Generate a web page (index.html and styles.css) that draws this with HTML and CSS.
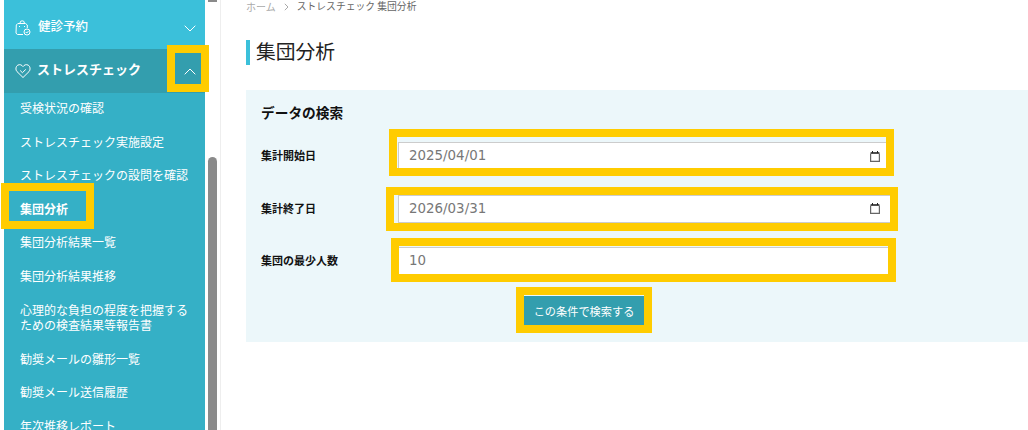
FILE: index.html
```html
<!DOCTYPE html>
<html lang="ja">
<head>
<meta charset="utf-8">
<title>集団分析</title>
<link rel="stylesheet" href="styles.css">
</head>
<body>
<div class="layout">
  <aside class="aside">
    <nav class="nav">
      <div class="nav-head">
        <svg class="nav-icon nav-icon-bag" viewBox="0 0 16 16" fill="none" stroke="currentColor" stroke-width="1"><path d="M5 3.500V3a2.200 2.200 0 0 1 4.400 0v.5"/><path d="M8 14.500H2.500L1 13.200 1.300 5l1.500-1.500h7.800L12.300 5v3"/><circle cx="12" cy="12" r="3"/><path d="M10.700 12l1 1 1.700-1.800"/><path d="M4.500 6v1M9.500 6v1"/></svg>
        <span class="nav-title">健診予約</span>
        <span class="toggle toggle-low"><svg class="chev" viewBox="0 0 12 7" fill="none" stroke="currentColor"><path d="M.7.7L6 6l5.300-5.300"/></svg></span>
      </div>
      <div class="nav-head nav-head-active">
        <svg class="nav-icon" viewBox="0 0 16 16" fill="none" stroke="currentColor" stroke-width="1"><path d="M8 14.500L2 8.600C.3 6.800.700 3.200 2.900 2.100 4.900 1.100 6.800 1.900 8 3.600c1.200-1.700 3.100-2.500 5.100-1.500 2.200 1.100 2.600 4.700.9 6.500z"/><path d="M5.200 7.500l2.200 2.200 3.400-3.300"/></svg>
        <span class="nav-title nav-title-active">ストレスチェック</span>
        <span class="toggle"><svg class="chev" viewBox="0 0 12 7" fill="none" stroke="currentColor"><path d="M.7 6.300L6 1l5.300 5.300"/></svg></span>
      </div>
      <ul class="sub">
        <li class="sub-item">受検状況の確認</li>
        <li class="sub-item">ストレスチェック実施設定</li>
        <li class="sub-item">ストレスチェックの設問を確認</li>
        <li class="sub-item sub-item-current">集団分析</li>
        <li class="sub-item">集団分析結果一覧</li>
        <li class="sub-item">集団分析結果推移</li>
        <li class="sub-item">心理的な負担の程度を把握する<br>ための検査結果等報告書</li>
        <li class="sub-item">勧奨メールの雛形一覧</li>
        <li class="sub-item">勧奨メール送信履歴</li>
        <li class="sub-item">年次推移レポート</li>
      </ul>
    </nav>
    <div class="scrollbar"><div class="nub"></div><div class="thumb"></div></div>
  </aside>

  <main class="main">
    <div class="crumbs">
      <span class="crumb-home">ホーム</span>
      <svg class="crumb-sep" viewBox="0 0 5 8" fill="none" stroke="currentColor"><path d="M.8.800L4 4 .8 7.200"/></svg>
      <span class="crumb-now">ストレスチェック 集団分析</span>
    </div>
    <h1 class="page-title">集団分析</h1>
    <section class="panel">
      <h2 class="panel-title">データの検索</h2>
      <form class="form">
        <div class="row">
          <label class="label">集計開始日</label>
          <div class="field"><input class="field-input" type="text" value="2025/04/01"><svg class="cal" viewBox="0 0 10 11" fill="none"><path d="M2.500 0v2M7.500 0v2" stroke="#222"/><path d="M.6 2h8.800" stroke="#222" stroke-width="1.600"/><path d="M.6 2.500v7.900h8.800V2.500" stroke="#666" stroke-width="1.200"/></svg></div>
        </div>
        <div class="row">
          <label class="label">集計終了日</label>
          <div class="field"><input class="field-input" type="text" value="2026/03/31"><svg class="cal" viewBox="0 0 10 11" fill="none"><path d="M2.500 0v2M7.500 0v2" stroke="#222"/><path d="M.6 2h8.800" stroke="#222" stroke-width="1.600"/><path d="M.6 2.500v7.900h8.800V2.500" stroke="#666" stroke-width="1.200"/></svg></div>
        </div>
        <div class="row">
          <label class="label">集団の最少人数</label>
          <div class="field"><input class="field-input" type="text" value="10"></div>
        </div>
        <div class="actions"><button class="submit" type="button">この条件で検索する</button></div>
      </form>
    </section>
  </main>
</div>

<div class="mark mark-toggle"></div>
<div class="mark mark-menu"></div>
<div class="mark mark-start"></div>
<div class="mark mark-end"></div>
<div class="mark mark-min"></div>
<div class="mark mark-btn"></div>
</body>
</html>
```

FILE: styles.css
```css
* { box-sizing: border-box; }
html, body { margin: 0; padding: 0; height: 430px; overflow: hidden; background: #fff; }
body { position: relative; font-family: "Noto Sans CJK JP", "Noto Sans", sans-serif; color: #111; }

.layout { display: flex; height: 430px; }

/* sidebar */
.aside { display: flex; width: 221px; flex: none; padding-left: 4px; border-right: 1px solid #eeeeee; overflow: hidden; }
.nav { width: 201px; flex: none; background: #35b0c6; color: #fff; height: 430px; overflow: hidden; }
.nav-head { display: flex; align-items: center; height: 49px; padding: 3px 2px 0 11px; background: #3bc0da; }
.nav-head-active { height: 44px; padding-top: 0; background: #339eae; }
.nav-icon { width: 16px; height: 16px; flex: none; }
.nav-icon-bag { margin-top: 3px; }
.nav-title { flex: 1; margin-left: 7px; font-size: 12.500px; font-weight: 500; line-height: 16px; }
.nav-title-active { margin: 0 0 4px 6px; font-size: 13px; font-weight: 700; }
.toggle { display: flex; width: 26px; height: 31px; align-items: center; justify-content: center; }
.toggle-low { margin-top: 4px; }
.chev { width: 12px; height: 7px; }
.sub { list-style: none; margin: 0; padding: 0 0 0 16px; }
.sub-item { padding: 7px 0 11px; font-size: 12px; line-height: 15.600px; }
.sub-item-current { font-weight: 700; }

.scrollbar { width: 9px; flex: none; margin-left: 3px; }
.nub { height: 2px; background: #8a8a8a; }
.thumb { height: 273px; margin-top: 155px; border-radius: 5px 5px 0 0; background: #8a8a8a; }

/* main */
.main { flex: 1; min-width: 0; padding-left: 25px; }
.crumbs { display: flex; align-items: center; height: 13px; font-size: 10px; line-height: 13px; }
.crumb-home { color: #aaaaaa; }
.crumb-sep { width: 5px; height: 8px; margin: 0 8px 0 8px; color: #aaaaaa; }
.crumb-now { color: #666666; font-size: 9.800px; }
.page-title { margin: 27px 0 0; height: 25px; padding-left: 6px; border-left: 4px solid #3bc0da; font-size: 19.800px; font-weight: 400; line-height: 21px; color: #222; }
.panel { margin-top: 25px; height: 252px; padding: 13px 0 0 15px; background: #ecf7fa; }
.panel-title { margin: 0; font-size: 13.700px; font-weight: 700; line-height: 18px; color: #111; }
.form { width: 630px; margin-top: 21px; display: flex; flex-direction: column; }
.row { display: flex; align-items: center; height: 28px; margin-bottom: 24.700px; }
.label { width: 137px; flex: none; margin-bottom: 2px; font-size: 11px; font-weight: 700; color: #111; }
.field { display: flex; align-items: center; flex: 1; min-width: 0; height: 28px; padding: 0 10px; border: 1px solid #cccccc; background: #fff; }
.field-input { flex: 1; min-width: 0; height: 100%; margin: 0; padding: 0 0 1px; border: 0; background: transparent; color: #777777; font-family: "DejaVu Sans", sans-serif; font-size: 13.400px; outline: none; }
.cal { width: 10px; height: 11px; flex: none; }
.actions { margin-top: -4px; padding-left: 263px; }
.submit { display: block; width: 120px; height: 30px; padding: 0; border: 0; background: #339eae; color: #fff; font-family: "Noto Sans CJK JP", sans-serif; font-size: 11.200px; }

/* review annotations drawn over the page */
.mark { position: absolute; border: 8px solid #ffcc00; }
.mark-toggle { left: 167px; top: 45px; width: 42px; height: 47px; }
.mark-menu { left: 1px; top: 183px; width: 93px; height: 46px; }
.mark-start { left: 389px; top: 129px; width: 505px; height: 47px; }
.mark-end { left: 386px; top: 187px; width: 512px; height: 44px; }
.mark-min { left: 391px; top: 238px; width: 505px; height: 44px; }
.mark-btn { left: 516px; top: 287px; width: 136px; height: 46px; }
```
